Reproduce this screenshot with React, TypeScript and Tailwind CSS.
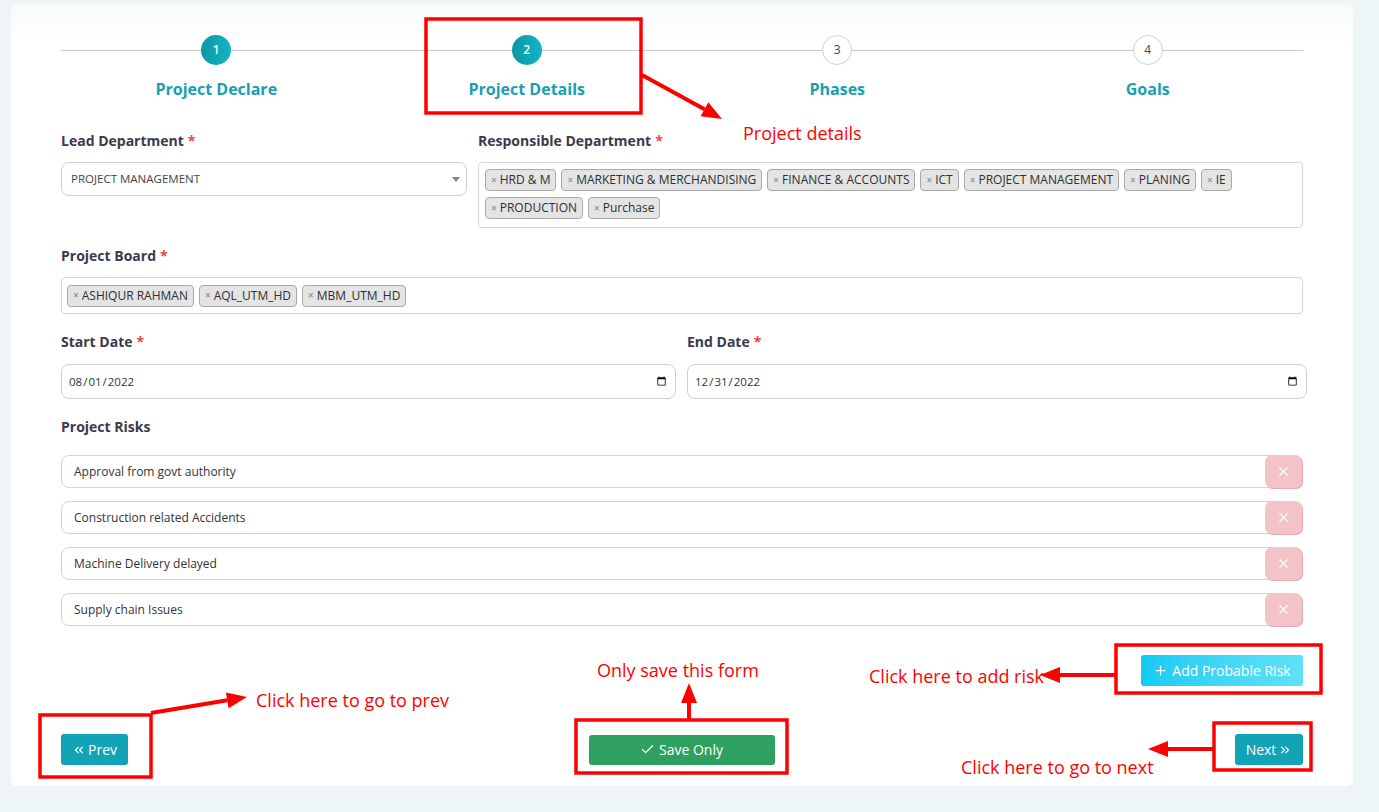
import { Check, ChevronsLeft, ChevronsRight, Plus, X } from "lucide-react";

const steps = [
  { n: 1, label: "Project Declare", done: true },
  { n: 2, label: "Project Details", done: true },
  { n: 3, label: "Phases", done: false },
  { n: 4, label: "Goals", done: false },
];

const responsible = [
  "HRD & M",
  "MARKETING & MERCHANDISING",
  "FINANCE & ACCOUNTS",
  "ICT",
  "PROJECT MANAGEMENT",
  "PLANING",
  "IE",
  "PRODUCTION",
  "Purchase",
];

const board = ["ASHIQUR RAHMAN", "AQL_UTM_HD", "MBM_UTM_HD"];

const risks = [
  "Approval from govt authority",
  "Construction related Accidents",
  "Machine Delivery delayed",
  "Supply chain Issues",
];

function Label({ text, required }: { text: string; required?: boolean }) {
  return (
    <div className="text-[14px] font-bold leading-[20px] text-[#3a3a4c] mb-[11px]">
      {text}
      {required && <span className="text-[#ef4444] ml-1">*</span>}
    </div>
  );
}

function Tag({ text }: { text: string }) {
  return (
    <span className="flex items-center h-[22px] px-[5px] rounded-[4px] border border-[#aaaaaa] bg-[#e4e4e4] text-[12px] text-[#2f2f2f]">
      <span className="text-[10px] text-[#999] font-bold mr-[3px]">×</span>
      {text}
    </span>
  );
}

// red annotation arrow with a filled head at (x2, y2)
function Arrow({ x1, y1, x2, y2 }: { x1: number; y1: number; x2: number; y2: number }) {
  const a = Math.atan2(y2 - y1, x2 - x1);
  const len = 20;
  const w = 8;
  const bx = x2 - len * Math.cos(a);
  const by = y2 - len * Math.sin(a);
  const p1 = `${bx + w * Math.sin(a)},${by - w * Math.cos(a)}`;
  const p2 = `${bx - w * Math.sin(a)},${by + w * Math.cos(a)}`;
  return (
    <g>
      <line x1={x1} y1={y1} x2={bx} y2={by} stroke="#ff0000" strokeWidth={4} />
      <polygon points={`${x2},${y2} ${p1} ${p2}`} fill="#ff0000" />
    </g>
  );
}

function Box({ x, y, w, h }: { x: number; y: number; w: number; h: number }) {
  return <rect x={x} y={y} width={w} height={h} fill="none" stroke="#ff0000" strokeWidth={3.5} />;
}

export default function App() {
  return (
    <div className="relative min-h-[812px] w-[1379px] bg-[#eef5f7] pt-[4px] pl-[11px] font-['Open_Sans',sans-serif] overflow-hidden">
      <div className="w-[1342px] bg-gradient-to-b from-[#f8fafa] to-white to-[40px] rounded-[6px] px-[50px] pt-[31px] pb-[21px]">
        {/* stepper */}
        <div className="relative flex">
          <div className="absolute left-0 right-0 top-[15px] h-px bg-[#c9c9c9]" />
          {steps.map((s) => (
            <div key={s.n} className="relative flex-1 flex flex-col items-center">
              <div
                className={`w-[30px] h-[30px] rounded-full flex items-center justify-center text-[12px] ${
                  s.done
                    ? "bg-gradient-to-r from-[#0b97a5] to-[#14b4c6] text-white font-semibold"
                    : "bg-white border border-[#cfcfcf] text-[#444]"
                }`}
              >
                {s.n}
              </div>
              <div className="mt-[12px] text-[16px] leading-[24px] font-bold text-[#189fb1]">{s.label}</div>
            </div>
          ))}
        </div>

        {/* departments */}
        <div className="flex gap-[11px] mt-[30px]">
          <div className="w-[406px]">
            <Label text="Lead Department" required />
            <div className="flex items-center justify-between h-[34px] rounded-[8px] border border-[#cfcfcf] pl-[9px] pr-[6px] text-[11.5px] text-[#444]">
              <span>PROJECT MANAGEMENT</span>
              <span className="w-0 h-0 border-l-[4px] border-r-[4px] border-t-[5px] border-l-transparent border-r-transparent border-t-[#888]" />
            </div>
          </div>
          <div className="flex-1">
            <Label text="Responsible Department" required />
            <div className="h-[66px] rounded-[4px] border border-[#d6d6d6] px-[6px] pt-[6px] flex flex-wrap content-start gap-x-[5px] gap-y-[6px]">
              {responsible.map((r) => (
                <Tag key={r} text={r} />
              ))}
            </div>
          </div>
        </div>

        {/* board */}
        <div className="mt-[18px]">
          <Label text="Project Board" required />
          <div className="h-[37px] rounded-[4px] border border-[#d6d6d6] px-[5px] flex items-center gap-[5px]">
            {board.map((b) => (
              <Tag key={b} text={b} />
            ))}
          </div>
        </div>

        {/* dates */}
        <div className="flex gap-[11px] mt-[18px]">
          <div className="w-[615px] shrink-0">
            <Label text="Start Date" required />
            <input
              type="date"
              defaultValue="2022-08-01"
              className="mt-[1px] w-full h-[35px] rounded-[8px] border border-[#cfcfcf] px-[6px] text-[11.5px] text-[#333]"
            />
          </div>
          <div className="w-[620px] shrink-0">
            <Label text="End Date" required />
            <input
              type="date"
              defaultValue="2022-12-31"
              className="mt-[1px] w-full h-[35px] rounded-[8px] border border-[#cfcfcf] px-[6px] text-[11.5px] text-[#333]"
            />
          </div>
        </div>

        {/* risks */}
        <div className="mt-[18px]">
          <div className="text-[14px] font-bold leading-[20px] text-[#3a3a4c]">Project Risks</div>
          <div className="mt-[18px] flex flex-col gap-[13px]">
            {risks.map((r) => (
              <div key={r} className="flex">
                <div className="flex-1 h-[33px] rounded-[8px] border border-[#d2d2d2] pl-[12px] flex items-center text-[12px] text-[#333]">
                  {r}
                </div>
                <button className="-ml-[37px] mr-[1px] w-[37px] h-[33px] rounded-[7px] bg-[#f4c3c7] shadow-[1px_1px_0_#e6aab0] flex items-center justify-center">
                  <X size={15} strokeWidth={1.8} className="text-white" />
                </button>
              </div>
            ))}
          </div>
        </div>

        <div className="flex justify-end mt-[29px]">
          <button className="h-[31px] w-[162px] rounded-[3px] bg-gradient-to-r from-[#0fcbf2] to-[#5fe1f8] text-white text-[14px] font-medium flex items-center justify-center gap-[4px]">
            <Plus size={15} strokeWidth={2} />
            Add Probable Risk
          </button>
        </div>

        <div className="flex items-center justify-between mt-[48px]">
          <button className="h-[31px] w-[67px] rounded-[3px] bg-[#12a3b6] text-white text-[14px] font-medium flex items-center justify-center gap-[2px]">
            <ChevronsLeft size={14} strokeWidth={2} />
            Prev
          </button>
          <button className="h-[30px] w-[186px] rounded-[3px] bg-[#2ea060] text-white text-[14px] font-medium flex items-center justify-center gap-[4px]">
            <Check size={15} strokeWidth={2} />
            Save Only
          </button>
          <button className="h-[31px] w-[68px] rounded-[3px] bg-[#12a3b6] text-white text-[14px] font-medium flex items-center justify-center gap-[2px]">
            Next
            <ChevronsRight size={14} strokeWidth={2} />
          </button>
        </div>
      </div>

      {/* annotations */}
      <svg className="absolute left-0 top-0 pointer-events-none" width={1379} height={812}>
        <Box x={426} y={19} w={215} h={94} />
        <Arrow x1={642} y1={75} x2={722} y2={119} />
        <Box x={40} y={715} w={111} h={62} />
        <Arrow x1={151} y1={713} x2={247} y2={697} />
        <Box x={576} y={720} w={211} h={53} />
        <Arrow x1={689} y1={720} x2={689} y2={683} />
        <Box x={1116} y={645} w={205} h={48} />
        <Arrow x1={1116} y1={675} x2={1040} y2={675} />
        <Box x={1214} y={723} w={97} h={47} />
        <Arrow x1={1214} y1={749} x2={1148} y2={749} />
      </svg>
      <div className="absolute left-[743px] top-[121px] text-[18px] leading-[24px] text-[#ff0000] pointer-events-none">Project details</div>
      <div className="absolute left-[597px] top-[658px] text-[18px] leading-[24px] text-[#ff0000] pointer-events-none">Only save this form</div>
      <div className="absolute left-[869px] top-[664px] text-[18px] leading-[24px] text-[#ff0000] pointer-events-none">Click here to add risk</div>
      <div className="absolute left-[256px] top-[688px] text-[18px] leading-[24px] text-[#ff0000] pointer-events-none">Click here to go to prev</div>
      <div className="absolute left-[961px] top-[755px] text-[18px] leading-[24px] text-[#ff0000] pointer-events-none">Click here to go to next</div>
    </div>
  );
}
